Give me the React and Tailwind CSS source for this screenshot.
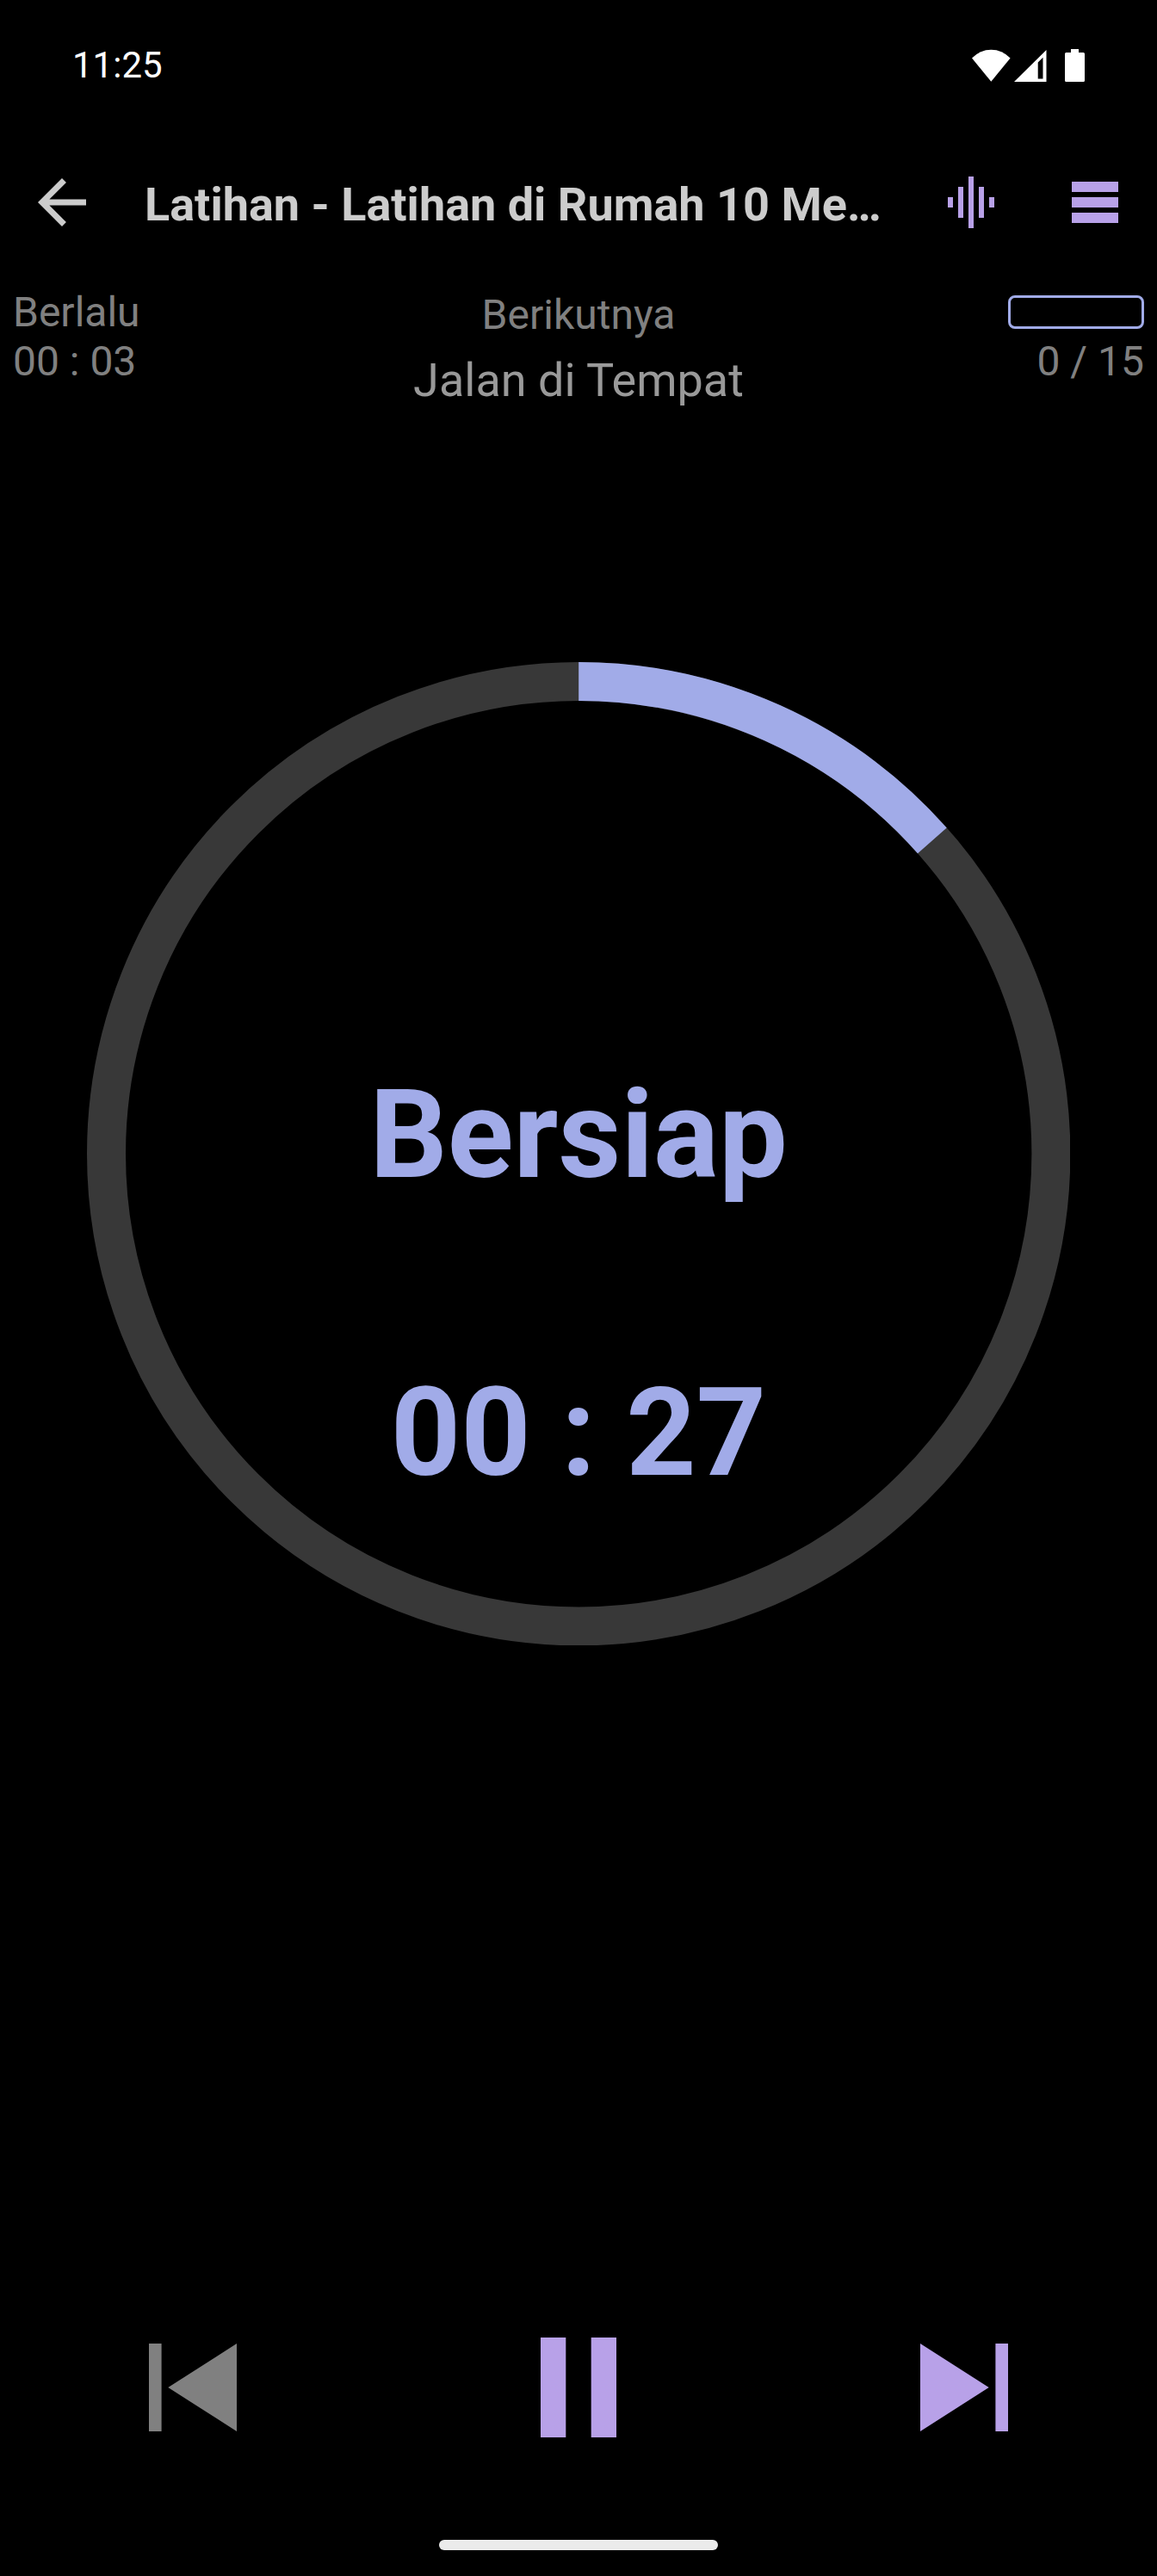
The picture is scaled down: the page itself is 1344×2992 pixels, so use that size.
import React, { useState } from "react";

const ELAPSED = 3
const REMAINING = 27
const PROGRESS = 13.46
const DONE = 0
const TOTAL = 15

function pad(n) {
  return String(n).padStart(2, '0')
}

function formatTime(seconds) {
  return `${pad(Math.floor(seconds / 60))} : ${pad(seconds % 60)}`
}

function StatusBar() {
  return (
    <div className="flex h-[151px] items-center justify-between pl-[84px] pr-21 text-[42px] text-white">
      <span>11:25</span>
      <svg className="h-[38px] w-[131px]" viewBox="0 0 131 38" fill="currentColor" aria-hidden="true">
        <path d="M0 10.500Q9.500 0.700 22.300 0.700T44.600 10.500L22.300 37.700Z" />
        <path fillRule="evenodd" d="M49 38L86.500 1V38ZM76.700 15.500V34.500H82.500V9.700Z" />
        <path d="M115 0h9v4h5.500a1.500 1.500 0 0 1 1.500 1.500V36.500a1.500 1.500 0 0 1 -1.500 1.500h-20a1.500 1.500 0 0 1 -1.500 -1.500V5.500a1.500 1.500 0 0 1 1.500 -1.500H115Z" />
      </svg>
    </div>
  )
}

function Header() {
  return (
    <header className="flex h-[168px] items-center">
      <button className="flex h-full w-36 shrink-0 items-center justify-center text-[#cccccc]" aria-label="Kembali">
        <svg className="size-[84px]" viewBox="0 0 24 24" fill="currentColor">
          <path d="M20 11H7.830l5.590-5.590L12 4l-8 8 8 8 1.410-1.410L7.830 13H20v-2z" />
        </svg>
      </button>
      <h1 className="min-w-0 flex-1 truncate px-6 pt-1 text-[54px] font-bold text-[#cccccc]">
        Latihan - Latihan di Rumah 10 Menit
      </h1>
      <button className="flex h-full w-36 shrink-0 items-center justify-center text-[#b8a1e8]" aria-label="Suara">
        <svg className="size-[72px]" viewBox="0 0 24 24" fill="currentColor">
          <path d="M7 18h2V6H7v12zm4 4h2V2h-2v20zm-8-8h2v-4H3v4zm12 4h2V6h-2v12zm4-8v4h2v-4h-2z" />
        </svg>
      </button>
      <button className="flex h-full w-36 shrink-0 items-center justify-center text-[#b8a1e8]" aria-label="Daftar">
        <svg className="size-[72px]" viewBox="0 0 24 24" fill="currentColor">
          <path d="M3 4h18v4H3zM3 10h18v4H3zM3 16h18v4H3z" />
        </svg>
      </button>
    </header>
  )
}

function Info() {
  return (
    <div className="grid grid-cols-[1fr_auto_1fr] items-start px-[15px] pt-[15px] text-[48px] leading-[57px] text-[#808080]">
      <div>
        <div>Berlalu</div>
        <div>{formatTime(ELAPSED)}</div>
      </div>
      <div className="pt-[3px] text-center">
        <div>Berikutnya</div>
        <div className="mt-4 text-[54px] leading-[64px] text-[#999999]">Jalan di Tempat</div>
      </div>
      <div className="flex flex-col items-end pt-[9px]">
        <div className="h-[39px] w-[158px] overflow-hidden rounded-lg border-3 border-[#a1abe8]">
          <div className="h-full bg-[#a1abe8]" style={{width: `${DONE / TOTAL * 100}%`}} />
        </div>
        <div className="mt-[9px]">{DONE} / {TOTAL}</div>
      </div>
    </div>
  )
}

function Timer() {
  return (
    <main className="mx-auto mt-[295px] grid w-[85%] text-[#a1abe8]">
      <svg className="col-start-1 row-start-1 w-full" viewBox="0 0 1142 1142" fill="none" strokeWidth="45">
        <circle cx="571" cy="571" r="548.5" stroke="#383838" />
        <circle
          cx="571"
          cy="571"
          r="548.5"
          stroke="currentColor"
          pathLength="100"
          strokeDasharray={`${PROGRESS} 100`}
          transform="rotate(-90 571 571)"
        />
      </svg>
      <div className="col-start-1 row-start-1 flex flex-col items-center gap-[178px] pt-[466px] text-[142px] font-bold leading-[168px]">
        <div>Bersiap</div>
        <div>{formatTime(REMAINING)}</div>
      </div>
    </main>
  )
}

function Controls() {
  const [paused, setPaused] = useState(false)

  return (
    <div className="mt-auto grid grid-cols-3 text-[#b8a1e8]">
      <button className="flex h-[176px] items-center justify-center text-[#808080] disabled:cursor-default" aria-label="Sebelumnya" disabled>
        <svg className="h-[102px] w-[102px]" viewBox="0 0 102 102" fill="currentColor">
          <path d="M0 0h14.600v102H0zM102 0v102L22.300 51z" />
        </svg>
      </button>
      <button className="flex h-[176px] items-center justify-center" aria-label={paused ? 'Lanjut' : 'Jeda'} onClick={() => setPaused(!paused)}>
        <svg className="h-[116px] w-[88px]" viewBox="0 0 88 116" fill="currentColor">
          {paused ? <path d="M0 0v116l88-58z" /> : <path d="M0 0h29.300v116H0zM58.700 0H88v116H58.700z" />}
        </svg>
      </button>
      <button className="flex h-[176px] items-center justify-center" aria-label="Berikutnya">
        <svg className="h-[102px] w-[102px]" viewBox="0 0 102 102" fill="currentColor">
          <path d="M87.400 0H102v102H87.400zM0 0v102l79.700-51z" />
        </svg>
      </button>
    </div>
  )
}

export default function App() {
  return (
    <div className="flex min-h-screen flex-col bg-black font-[Roboto,sans-serif]">
      <StatusBar />
      <Header />
      <Info />
      <Timer />
      <Controls />
      <div className="mx-auto mt-[89px] mb-[30px] h-3 w-[324px] rounded-full bg-[#ebebeb]" />
    </div>
  )
}
